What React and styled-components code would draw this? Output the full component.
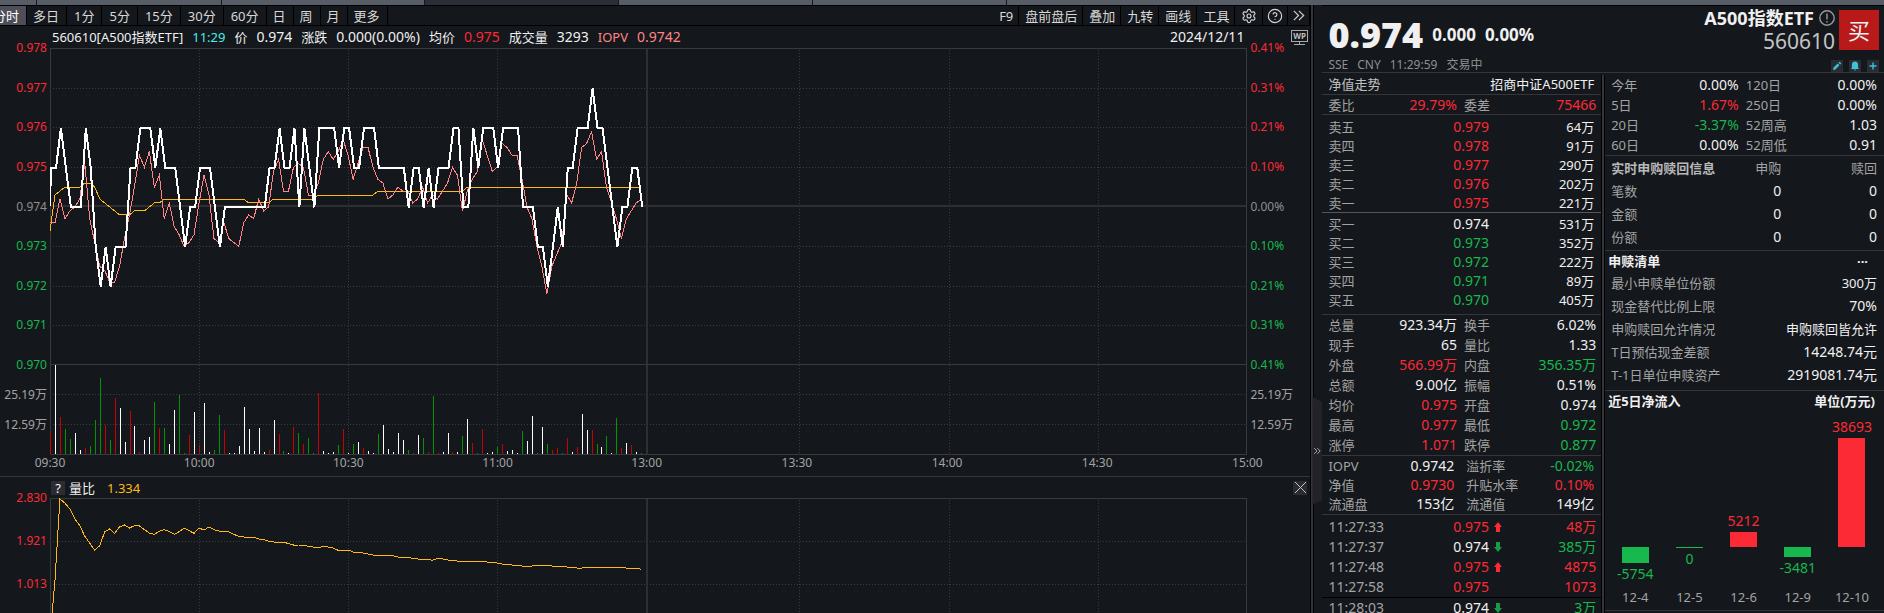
import styled, { createGlobalStyle, css } from "styled-components"
import { Settings, HelpCircle } from "lucide-react"

const colors = {
    bg: "#14171c",
    line: "#35353a",
    red: "#fb2a35",
    green: "#17b84d",
    white: "#f0f0f0",
    label: "#a3a3a3",
    grey: "#8f8f8f",
    cyan: "#45f0e6",
    pink: "#ff8585",
    yellow: "#ffb917",
};

const periods = ["多日", "1分", "5分", "15分", "30分", "60分", "日", "周", "月", "更多"];
const tools = ["F9", "盘前盘后", "叠加", "九转", "画线", "工具"];

const priceLabels = [
    ["0.978", "0.41%", "red"],
    ["0.977", "0.31%", "red"],
    ["0.976", "0.21%", "red"],
    ["0.975", "0.10%", "red"],
    ["0.974", "0.00%", "grey"],
    ["0.973", "0.10%", "green"],
    ["0.972", "0.21%", "green"],
    ["0.971", "0.31%", "green"],
    ["0.970", "0.41%", "green"],
];
const volumeLabels = ["25.19万", "12.59万"];
const times = ["09:30", "10:00", "10:30", "11:00", "13:00", "13:30", "14:00", "14:30", "15:00"];

// one value per minute, last digit of 0.97x
const price = [
    5, 5, 6, 5, 4, 4, 4, 6, 5, 3, 2, 3, 2, 3, 3, 3, 5, 5, 6, 6, 6, 5, 6, 5, 5, 5, 4, 3, 4, 4,
    5, 5, 5, 4, 3, 4, 4, 4, 4, 4, 4, 4, 4, 4, 5, 5, 6, 5, 5, 6, 4, 6, 5, 4, 6, 6, 6, 6, 5, 6,
    6, 5, 5, 6, 6, 6, 5, 5, 5, 5, 5, 5, 4, 5, 5, 4, 5, 4, 5, 5, 5, 6, 6, 4, 4, 6, 5, 6, 6, 6,
    5, 6, 6, 6, 6, 4, 4, 4, 3, 3, 2, 3, 4, 3, 5, 5, 6, 6, 6, 7, 6, 6, 5, 4, 3, 4, 4, 5, 5, 4,
];

// offset from 0.9740 in steps of 0.0001
const iopv = [
    -4, -4, 2, -3, -1, 0, 2, 11, -3, -9, -15, -16, -19, -19, -15, -8, -2, 5, 13, 10, 14, 5, 8, -3, 1, -5, -7, -10, -9, -7,
    1, 8, 3, -8, -9, -4, -8, -9, -10, -4, -2, -3, 2, -1, 0, 9, 12, 4, 4, 10, 11, 10, 3, 3, 6, 12, 14, 12, 14, 17,
    13, 7, 11, 15, 15, 10, 7, 6, 2, 3, 5, 4, 4, 1, 2, 5, 1, 3, 2, 4, 6, 10, 8, -1, 4, 7, 9, 17, 13, 9,
    10, 16, 15, 13, 13, 7, 0, -3, -10, -15, -22, -15, -12, -9, 3, 1, 6, 15, 16, 19, 12, 14, 5, 1, -3, -8, -3, -1, 1, 2,
];

// [minute, offset] where the average changes
const average = [
    [0, -6], [1, 3], [2, 4], [3, 5], [6, 5], [7, 6], [8, 6], [9, 5], [10, 2], [11, 1], [12, 0], [13, -1],
    [14, -2], [16, -2], [17, -1], [19, -1], [21, 1], [22, 1], [23, 2], [39, 2], [40, 1], [44, 1],
    [45, 2], [53, 2], [54, 3], [65, 3], [66, 4], [83, 4], [84, 5], [119, 5],
];

const volume = (
    "r21 w89 r37 g25 g15 w21 w4 r6 g8 g34 g76 r29 g14 r56 w46 w12 r43 w28 r2 w14 w17 g52 r26 g26 w10 w44 g59 g1 r19 w42 " +
    "r9 w51 w2 g4 g39 r24 w1 w1 w8 w47 w25 w3 w26 w2 r4 w34 r20 g3 w1 r27 g21 r10 g16 g1 r61 w3 w1 w2 g9 r25 " +
    "w1 g10 w12 r6 w3 w1 g20 w29 w5 w2 w21 w14 g4 r1 w19 g16 r2 g58 r1 w2 w21 r2 w2 g18 w35 r11 g1 r25 w1 w2 " +
    "g7 r10 w3 w4 w1 g23 w13 w38 g1 w27 g10 r4 r6 g1 r16 w2 r7 w40 w24 r24 g10 w7 g18 w1 g36 r6 w11 r9 w2 g1"
).split(" ");

// distance below 2.830, 129 steps between two labels
const volumeRatio = [
    420, 245, 3, 15, 33, 63, 83, 115, 135, 157, 143, 102, 93, 106, 87, 81, 90, 83, 84, 95, 105, 109, 100, 95, 100, 109, 101, 90, 98, 106,
    90, 96, 87, 95, 99, 99, 102, 109, 115, 117, 117, 117, 123, 124, 130, 132, 132, 132, 137, 141, 141, 142, 145, 147, 150, 144, 147, 150, 157, 159,
    156, 162, 162, 165, 168, 171, 174, 171, 171, 173, 177, 177, 178, 181, 183, 183, 184, 187, 181, 183, 186, 187, 189, 189, 189, 189, 189, 191, 192, 194,
    195, 198, 198, 201, 202, 204, 204, 204, 201, 204, 201, 204, 204, 205, 207, 208, 210, 210, 207, 207, 207, 207, 207, 207, 210, 207, 210, 210, 211, 214,
];

const asks = [
    ["卖五", "0.979", "64万", "red"],
    ["卖四", "0.978", "91万", "red"],
    ["卖三", "0.977", "290万", "red"],
    ["卖二", "0.976", "202万", "red"],
    ["卖一", "0.975", "221万", "red"],
];
const bids = [
    ["买一", "0.974", "531万", "white"],
    ["买二", "0.973", "352万", "green"],
    ["买三", "0.972", "222万", "green"],
    ["买四", "0.971", "89万", "green"],
    ["买五", "0.970", "405万", "green"],
];
const stats = [
    ["总量", "923.34万", "white", "换手", "6.02%", "white"],
    ["现手", "65", "white", "量比", "1.33", "white"],
    ["外盘", "566.99万", "red", "内盘", "356.35万", "green"],
    ["总额", "9.00亿", "white", "振幅", "0.51%", "white"],
    ["均价", "0.975", "red", "开盘", "0.974", "white"],
    ["最高", "0.977", "red", "最低", "0.972", "green"],
    ["涨停", "1.071", "red", "跌停", "0.877", "green"],
];
const fundStats = [
    ["IOPV", "0.9742", "white", "溢折率", "-0.02%", "green"],
    ["净值", "0.9730", "red", "升贴水率", "0.10%", "red"],
    ["流通盘", "153亿", "white", "流通值", "149亿", "white"],
];
const ticks = [
    ["11:27:33", "0.975", "red", "up", "48万", "red"],
    ["11:27:37", "0.974", "white", "down", "385万", "green"],
    ["11:27:48", "0.975", "red", "up", "4875", "red"],
    ["11:27:58", "0.975", "red", "", "1073", "red"],
    ["11:28:03", "0.974", "white", "down", "3万", "green"],
];
const returns = [
    ["今年", "0.00%", "white", "120日", "0.00%", "white"],
    ["5日", "1.67%", "red", "250日", "0.00%", "white"],
    ["20日", "-3.37%", "green", "52周高", "1.03", "white"],
    ["60日", "0.00%", "white", "52周低", "0.91", "white"],
];
const creations = ["笔数", "金额", "份额"];
const basket = [
    ["最小申赎单位份额", "300万"],
    ["现金替代比例上限", "70%"],
    ["申购赎回允许情况", "申购赎回皆允许"],
    ["T日预估现金差额", "14248.74元"],
    ["T-1日单位申赎资产", "2919081.74元"],
];
const inflow = [
    ["12-4", -5754],
    ["12-5", 0],
    ["12-6", 5212],
    ["12-9", -3481],
    ["12-10", 38693],
];

const PLOT_W = 1197;
const TICK_H = 39.6;
const PRICE_H = TICK_H * 8;
const PLOT_H = 407;
const minuteX = (m) => m * 4.967;
const gridX = [149, 298, 447, 749, 899, 1048];
const toPath = (points) => "M" + points.map(([x, y]) => `${x.toFixed(1)} ${y.toFixed(1)}`).join("L");
const offsetY = (n) => (4 - n / 10) * TICK_H + 0.5;

const pricePath = toPath([[0, 4 * TICK_H], ...price.map((p, i) => [minuteX(i) + 1, (8 - p) * TICK_H + 1])]);
const iopvPath = toPath(iopv.map((n, i) => [minuteX(i), offsetY(n)]));
const averagePath = toPath(average.map(([m, n]) => [minuteX(m), offsetY(n)]));
const ratioPath = toPath(volumeRatio.map((n, i) => [minuteX(i), n]));
const barColors = { r: "#c80000", g: "#009600", w: "#ffffff" };
const barPath = (key) =>
    volume.map((bar, i) => (bar[0] === key ? `M${(minuteX(i) + 0.5).toFixed(1)} 406v-${bar.slice(1)}` : "")).join("");

const PriceChart = () => (
    <Plot $height={PLOT_H} viewBox={`0 0 ${PLOT_W} ${PLOT_H}`} preserveAspectRatio="none" role="img" aria-label="分时走势">
        {[1, 2, 3, 5, 6, 7].map((n) => <GridLine key={n} d={`M3 ${Math.round(n * TICK_H) + 0.5}H${PLOT_W}`} />)}
        {[346, 376].map((y) => <GridLine key={y} d={`M3 ${y + 0.5}H${PLOT_W}`} />)}
        {gridX.map((x) => <GridLine key={x} d={`M${x + 0.5} 2V406`} />)}
        <Axis d={`M0 158H${PLOT_W}M596.5 0V406`} $width={2} />
        <Axis d={`M0 0.5H${PLOT_W}M0 ${Math.round(PRICE_H) - 0.5}H${PLOT_W}M0 406.5H${PLOT_W}M0.5 0V406M1196.5 0V406`} />
        {Object.keys(barColors).map((key) => <Series key={key} d={barPath(key)} $color={barColors[key]} />)}
        <Series d={averagePath} $color={colors.yellow} />
        <Series d={iopvPath} $color={colors.pink} />
        <Series d={pricePath} $color="#fff" $width={2} />
    </Plot>
);

const RatioChart = () => (
    <Plot $height={115} viewBox={`0 0 ${PLOT_W} 345`} preserveAspectRatio="none" role="img" aria-label="量比走势">
        {[129, 258].map((y) => <GridLine key={y} d={`M3 ${y}H${PLOT_W}`} />)}
        {gridX.map((x) => <GridLine key={x} d={`M${x + 0.5} 6V345`} />)}
        <Axis d="M596.5 0V345" $width={2} />
        <Axis d={`M0 1.5H${PLOT_W}M0.5 0V345M1196.5 0V345`} />
        <Series d={ratioPath} $color={colors.yellow} />
    </Plot>
);

const DoubleChevron = ({ size }) => (
    <svg width={size} height={size} viewBox="0 0 14 14" fill="none" stroke="#c8c8c8" strokeWidth="1.4">
        <path d="M2 2l5 5-5 5M7.500 2l5 5-5 5" />
    </svg>
);

const Arrow = ({ direction }) => (
    <svg width="8" height="10" viewBox="0 0 8 10" fill={direction === "up" ? colors.red : "#159c45"}>
        <path d={direction === "up" ? "M4 0l4 5H6v5H2V5H0z" : "M4 10l4-5H6V0H2v5H0z"} />
    </svg>
);

const PairTable = ({ rows, inset, height = 20 }) => (
    <Table $height={height} $inset={inset}>
        <tbody>
            {rows.map(([label, value, tone, label2, value2, tone2]) => (
                <tr key={label}>
                    <Label $width="22%">{label}</Label>
                    <Value $width={inset ? "25%" : "26%"} $tone={tone}>{value}</Value>
                    <Label $width="26%" $indent={inset ? 12 : 7}>{label2}</Label>
                    <Value $tone={tone2}>{value2}</Value>
                </tr>
            ))}
        </tbody>
    </Table>
);

const BookTable = ({ rows }) => (
    <Table $height={19} $inset>
        <tbody>
            {rows.map(([label, value, size, tone]) => (
                <tr key={label}>
                    <Label $width="30%">{label}</Label>
                    <Value $width="30%" $tone={tone}>{value}</Value>
                    <Value $small>{size}</Value>
                </tr>
            ))}
        </tbody>
    </Table>
);

const TickTable = ({ rows }) => (
    <Table $height={20}>
        <tbody>
            {rows.map(([time, value, tone, direction, size, sizeTone]) => (
                <tr key={time}>
                    <Label $width="30%" $large>{time}</Label>
                    <Value $width="30%" $tone={tone}>{value}</Value>
                    <ArrowCell>{direction && <Arrow direction={direction} />}</ArrowCell>
                    <Value $tone={sizeTone}>{size}</Value>
                </tr>
            ))}
        </tbody>
    </Table>
);

const Inflow = () => (
    <Bars>
        {inflow.map(([date, amount]) => {
            const tone = amount > 0 ? "red" : "green";
            const bar = <Bar $tone={tone} style={{ height: Math.max(1, Math.round(Math.abs(amount) / 355)) }} />;
            return (
                <BarColumn key={date}>
                    <Above>{amount > 0 && <><Amount $tone={tone}>{amount}</Amount>{bar}</>}</Above>
                    <Below>{amount <= 0 && <>{bar}<Amount $tone={tone}>{amount}</Amount></>}</Below>
                    <DateLabel>{date}</DateLabel>
                </BarColumn>
            );
        })}
    </Bars>
);

const App = () => {
    return (
        <Page>
            <GlobalStyle />
            <TabStrip>
                <StripTab $width={36} />
                <StripTab $width={184} />
                <StripTab $width={202} />
                <StripTab $width={193} $active />
                <StripTab $width={193} />
                <StripTab $width={193} />
                <StripTab $grow />
            </TabStrip>
            <Workspace>
                <ChartPane>
                    <Toolbar>
                        <ActivePeriod>分时</ActivePeriod>
                        {periods.map((name) => <ToolButton key={name} $wide={/\d/.test(name)}>{name}</ToolButton>)}
                        <Spacer />
                        {tools.map((name) => <CompactButton key={name}>{name}</CompactButton>)}
                        <CompactButton aria-label="设置"><Settings size={16} strokeWidth={1.7} /></CompactButton>
                        <TightButton aria-label="帮助"><HelpCircle size={16} strokeWidth={1.7} /></TightButton>
                        <TightButton aria-label="展开"><DoubleChevron size={13} /></TightButton>
                    </Toolbar>
                    <InfoBar>
                        <Info>560610[A500指数ETF]</Info>
                        <Info $tone="cyan">11:29</Info>
                        <Info>价</Info>
                        <Info $large>0.974</Info>
                        <Info>涨跌</Info>
                        <Info $large>0.000(0.00%)</Info>
                        <Info>均价</Info>
                        <Info $large $tone="red">0.975</Info>
                        <Info>成交量</Info>
                        <Info $large>3293</Info>
                        <Info $tone="pink">IOPV</Info>
                        <Info $large $tone="pink">0.9742</Info>
                        <Spacer />
                        <Info $large>2024/12/11</Info>
                        <IconSlot>
                            <svg width="17" height="15" viewBox="0 0 17 15" fill="none" stroke="#a8a8a8">
                                <rect x="0.500" y="0.500" width="16" height="11" />
                                <path d="M8.500 12v2M3 14.500h11" />
                                <text x="8.500" y="9" textAnchor="middle" fontSize="8" fontWeight="700" fill="#c0c0c0" stroke="none">WP</text>
                            </svg>
                        </IconSlot>
                    </InfoBar>
                    <ChartRow>
                        <Scale>
                            <PriceScale>
                                {priceLabels.map(([value, , tone]) => <ScaleLabel key={value} $tone={tone}>{value}</ScaleLabel>)}
                            </PriceScale>
                            {volumeLabels.map((text) => <VolumeLabel key={text}>{text}</VolumeLabel>)}
                        </Scale>
                        <PriceChart />
                        <Scale $right>
                            <PriceScale>
                                {priceLabels.map(([value, percent, tone]) => <ScaleLabel key={value} $tone={tone}>{percent}</ScaleLabel>)}
                            </PriceScale>
                            {volumeLabels.map((text) => <VolumeLabel key={text}>{text}</VolumeLabel>)}
                        </Scale>
                    </ChartRow>
                    <TimeAxis>
                        {times.map((time) => <time key={time}>{time}</time>)}
                    </TimeAxis>
                    <IndicatorBar>
                        <SmallButton aria-label="指标说明">?</SmallButton>
                        <Info>量比</Info>
                        <Ratio>1.334</Ratio>
                        <Spacer />
                        <SmallButton aria-label="关闭">
                            <svg width="13" height="13" viewBox="0 0 13 13" stroke="#c0c0c0">
                                <path d="M1 1l11 11M12 1L1 12" />
                            </svg>
                        </SmallButton>
                    </IndicatorBar>
                    <ChartRow>
                        <Scale>
                            <RatioScale>
                                <ScaleLabel $tone="red">2.830</ScaleLabel>
                                <ScaleLabel $tone="red">1.921</ScaleLabel>
                                <ScaleLabel $tone="red">1.013</ScaleLabel>
                            </RatioScale>
                        </Scale>
                        <RatioChart />
                        <Scale $right />
                    </ChartRow>
                </ChartPane>
                <Gutter>
                    <Handle aria-label="收起"><DoubleChevron size={8} /></Handle>
                </Gutter>
                <Side>
                    <QuoteHeader>
                        <QuoteLine>
                            <LastPrice>0.974</LastPrice>
                            <Change>0.000</Change>
                            <Change>0.00%</Change>
                        </QuoteLine>
                        <Security>
                            <Name>
                                A500指数ETF
                                <svg width="16" height="16" viewBox="0 0 16 16" fill="none" stroke="#999999" strokeWidth="1.4">
                                    <circle cx="8" cy="8" r="7.200" />
                                    <path d="M8 3.500v6M8 11v1.500" />
                                </svg>
                            </Name>
                            <Code>560610</Code>
                        </Security>
                        <BuyButton>买</BuyButton>
                        <Market>
                            <span>SSE</span>
                            <span>CNY</span>
                            <span>11:29:59</span>
                            <span>交易中</span>
                        </Market>
                        <Actions>
                            <MiniButton aria-label="编辑">
                                <svg width="10" height="10" viewBox="0 0 10 10" fill="#3fc1d6">
                                    <path d="M1 9l.6-2.400L5.700 2.500l1.800 1.800L3.400 8.400zM6.400 1.800L7.600.7l1.800 1.800-1.200 1.100z" />
                                </svg>
                            </MiniButton>
                            <MiniButton aria-label="提醒">
                                <svg width="10" height="10" viewBox="0 0 10 10" fill="#3fc1d6">
                                    <path d="M5 .5C2.800.5 1.900 2 1.900 4v2.600L1 8h8l-.9-1.400V4C8.100 2 7.200.5 5 .5zM3.800 8.500h2.400L5 9.700z" />
                                </svg>
                            </MiniButton>
                            <MiniButton aria-label="添加">
                                <svg width="10" height="10" viewBox="0 0 10 10" stroke="#3fc1d6" strokeWidth="1.400">
                                    <path d="M5 1.500v7M1.500 5h7" />
                                </svg>
                            </MiniButton>
                        </Actions>
                    </QuoteHeader>
                    <Columns>
                        <Column>
                            <Section>
                                <TitleRow>
                                    <span>净值走势</span>
                                    <FundName>招商中证A500ETF</FundName>
                                </TitleRow>
                            </Section>
                            <Section>
                                <PairTable height={19} rows={[["委比", "29.79%", "red", "委差", "75466", "red"]]} />
                            </Section>
                            <Section $top={2} $bright>
                                <BookTable rows={asks} />
                            </Section>
                            <Section $top={1} $bottom={5}>
                                <BookTable rows={bids} />
                            </Section>
                            <Section>
                                <PairTable rows={stats} />
                            </Section>
                            <Section $bottom={1}>
                                <PairTable inset height={19} rows={fundStats} />
                            </Section>
                            <Section $top={2} $dark>
                                <TickTable rows={ticks.slice(0, 4)} />
                            </Section>
                            <Section>
                                <TickTable rows={ticks.slice(4)} />
                            </Section>
                        </Column>
                        <Column>
                            <Section $right={7}>
                                <PairTable rows={returns} />
                            </Section>
                            <Section $right={7} $bottom={2}>
                                <Table $height={23}>
                                    <thead>
                                        <tr>
                                            <Label as="th" $strong>实时申购赎回信息</Label>
                                            <Label as="th" $end $width="23%">申购</Label>
                                            <Label as="th" $end $width="36%">赎回</Label>
                                        </tr>
                                    </thead>
                                    <tbody>
                                        {creations.map((name) => (
                                            <tr key={name}>
                                                <Label>{name}</Label>
                                                <Value>0</Value>
                                                <Value>0</Value>
                                            </tr>
                                        ))}
                                    </tbody>
                                </Table>
                            </Section>
                            <Section $right={7} $bottom={4}>
                                <Heading><span>申赎清单</span><MoreButton aria-label="更多">···</MoreButton></Heading>
                                <Table $height={23}>
                                    <tbody>
                                        {basket.map(([label, value]) => (
                                            <tr key={label}>
                                                <Label $width="55%">{label}</Label>
                                                <Value $small={/[万许]$/.test(value)}>{value}</Value>
                                            </tr>
                                        ))}
                                    </tbody>
                                </Table>
                            </Section>
                            <Section $right={7}>
                                <Heading><span>近5日净流入</span><span>单位(万元)</span></Heading>
                                <Inflow />
                            </Section>
                        </Column>
                    </Columns>
                </Side>
            </Workspace>
        </Page>
    )
}

const GlobalStyle = createGlobalStyle`
    *{
        box-sizing:border-box;
    }
    body{
        margin:0;
        background:${colors.bg};
        color:${colors.white};
        font:13px/16px "Noto Sans","Noto Sans CJK SC",sans-serif;
    }
    button{
        font:inherit;
        color:inherit;
        border:none;
        padding:0;
        cursor:pointer;
    }
    svg{
        display:block;
        flex:none;
    }
`;

const tone = css`
    color:${(props) => colors[props.$tone || "white"]};
`;

const Page = styled.div`
    height:100vh;
    display:flex;
    flex-direction:column;
    overflow:hidden;
`;

const TabStrip = styled.div`
    display:flex;
    gap:1px;
    height:5px;
    flex:none;
    background:#14161a;
`;

const StripTab = styled.div`
    width:${(props) => props.$width}px;
    flex:${(props) => (props.$grow ? 1 : "none")};
    background:${(props) => (props.$active ? "#2c2d36" : "#565d67")};
`;

const Workspace = styled.main`
    flex:1;
    min-height:0;
    display:grid;
    grid-template-columns:minmax(0,7fr) 12px minmax(0,3fr);
`;

const ChartPane = styled.section`
    display:flex;
    flex-direction:column;
    min-width:0;
    overflow:hidden;
`;

const Toolbar = styled.div`
    display:flex;
    flex:none;
    height:21px;
    border-top:1px solid #000;
    border-bottom:1px solid #000;
    color:#d8d8d8;
`;

const ToolButton = styled.button`
    display:flex;
    align-items:center;
    background:none;
    padding:0 7px 0 ${(props) => (props.$wide ? 7 : 6)}px;
    border-right:1px solid #000;
    &:hover{
        background:#2c2d36;
    }
`;

const CompactButton = styled(ToolButton)`
    padding:0 5px 0 6px;
`;

const TightButton = styled(ToolButton)`
    padding:0 4px;
`;

const ActivePeriod = styled(ToolButton)`
    width:27px;
    padding:0 7px 0 0;
    justify-content:flex-end;
    white-space:nowrap;
    overflow:hidden;
    background:#4e4e58;
    color:#fff;
`;

const Spacer = styled.div`
    flex:1;
`;

const InfoBar = styled.div`
    display:flex;
    align-items:center;
    flex:none;
    gap:9px;
    height:22px;
    padding-left:52px;
`;

const Info = styled.span`
    ${tone}
    font-size:${(props) => (props.$large ? 14 : 13)}px;
    white-space:nowrap;
`;

const IconSlot = styled.span`
    width:57px;
    padding-left:38px;
`;

const ChartRow = styled.div`
    display:grid;
    grid-template-columns:50px minmax(0,1fr) 63px;
    flex:none;
`;

const Scale = styled.div`
    display:flex;
    flex-direction:column;
    align-items:${(props) => (props.$right ? "flex-start" : "flex-end")};
    padding:0 3px;
    margin-top:-8px;
    font-size:12px;
    color:${colors.label};
`;

const PriceScale = styled.div`
    display:flex;
    flex-direction:column;
    justify-content:space-between;
    height:333px;
`;

const RatioScale = styled(PriceScale)`
    height:102px;
`;

const ScaleLabel = styled.span`
    ${tone}
`;

const VolumeLabel = styled.span`
    margin-top:14px;
`;

const Plot = styled.svg`
    width:100%;
    height:${(props) => props.$height}px;
    shape-rendering:crispEdges;
    path{
        fill:none;
        vector-effect:non-scaling-stroke;
    }
`;

const GridLine = styled.path`
    stroke:#3a3b40;
    stroke-dasharray:1 2;
`;

const Axis = styled.path`
    stroke:${(props) => (props.$width ? "#2f2f33" : "#3a3a3e")};
    stroke-width:${(props) => props.$width || 1};
`;

const Series = styled.path`
    stroke:${(props) => props.$color};
    stroke-width:${(props) => props.$width || 1};
`;

const TimeAxis = styled.div`
    display:grid;
    grid-template-columns:repeat(4,149fr) repeat(4,150fr) 50px;
    flex:none;
    height:21px;
    padding:0 38px 0 25px;
    color:${colors.label};
    font-size:12px;
    time{
        width:50px;
        text-align:center;
    }
`;

const IndicatorBar = styled.div`
    display:flex;
    align-items:center;
    flex:none;
    gap:4px;
    height:22px;
    padding:0 3px 0 51px;
    border-top:1px solid ${colors.line};
`;

const Ratio = styled.span`
    margin-left:8px;
    color:${colors.yellow};
`;

const SmallButton = styled.button`
    display:flex;
    align-items:center;
    justify-content:center;
    width:14px;
    height:14px;
    background:#2b2b31;
`;

const Gutter = styled.div`
    border-left:1px solid #000;
    box-shadow:inset 2px 0 #34343a, inset 3px 0 #000;
`;

const Handle = styled.button`
    display:flex;
    align-items:center;
    justify-content:center;
    width:10px;
    height:108px;
    margin:392px 0 0 1px;
    background:#232228;
    clip-path:polygon(0 0,100% 5px,100% 103px,0 100%);
`;

const Side = styled.aside`
    display:flex;
    flex-direction:column;
    min-width:0;
    border-top:1px solid #000;
    overflow:hidden;
`;

const QuoteHeader = styled.header`
    display:grid;
    grid-template-columns:1fr auto 40px;
    grid-template-rows:48px 18px;
    column-gap:4px;
    flex:none;
    padding:0 5px 0 6px;
    border-bottom:1px solid ${colors.line};
`;

const QuoteLine = styled.div`
    display:flex;
    align-items:center;
    gap:9px;
    padding-top:10px;
    font-weight:700;
`;

const LastPrice = styled.strong`
    font-size:36px;
    line-height:36px;
`;

const Change = styled.span`
    font-size:17px;
    line-height:24px;
`;

const Security = styled.div`
    display:flex;
    flex-direction:column;
    align-items:flex-end;
`;

const Name = styled.h1`
    display:flex;
    align-items:center;
    gap:5px;
    margin:0;
    padding-top:1px;
    font-size:18px;
    line-height:22px;
`;

const Code = styled.span`
    font-size:21px;
    line-height:24px;
    color:#c4c4c4;
`;

const BuyButton = styled.button`
    height:40px;
    margin-top:4px;
    background:#b81a1a;
    font-size:22px;
    line-height:40px;
`;

const Market = styled.div`
    display:flex;
    align-items:flex-end;
    gap:9px;
    color:${colors.grey};
    font-size:12px;
    line-height:14px;
`;

const Actions = styled.div`
    grid-column:2 / 4;
    display:flex;
    align-items:flex-end;
    justify-content:flex-end;
    gap:6px;
`;

const MiniButton = styled.button`
    display:flex;
    align-items:center;
    justify-content:center;
    width:12px;
    height:12px;
    background:#2a2c33;
`;

const Columns = styled.div`
    flex:1;
    display:grid;
    grid-template-columns:minmax(0,1fr) minmax(0,1fr);
    gap:4px;
    margin-top:2px;
    min-height:0;
    background:linear-gradient(#34343a,#34343a) center / 2px 100% no-repeat #000;
`;

const Column = styled.div`
    background:${colors.bg};
    min-height:0;
    overflow:hidden;
`;

const Section = styled.section`
    padding:${(props) => props.$top || 0}px ${(props) => props.$right || 5}px ${(props) => props.$bottom || 0}px 6px;
    border-bottom:1px solid ${(props) => (props.$dark ? "#000" : props.$bright ? "#55555e" : colors.line)};
`;

const TitleRow = styled.div`
    display:flex;
    justify-content:space-between;
    padding-right:2px;
    line-height:19px;
    color:#c0c0c0;
`;

const FundName = styled.span`
    color:${colors.white};
`;

const Table = styled.table`
    width:100%;
    border-collapse:collapse;
    table-layout:fixed;
    td,th{
        height:${(props) => props.$height}px;
        line-height:16px;
        white-space:nowrap;
    }
    td:last-child{
        padding-right:${(props) => (props.$inset ? 2 : 0)}px;
    }
`;

const Label = styled.td`
    width:${(props) => props.$width || "auto"};
    padding:0 0 0 ${(props) => props.$indent || 0}px;
    color:${(props) => (props.$strong ? "#b8b8b8" : colors.label)};
    font-size:${(props) => (props.$large ? 14 : 13)}px;
    font-weight:${(props) => (props.$strong ? 700 : 400)};
    text-align:${(props) => (props.$end ? "right" : "left")};
`;

const Value = styled.td`
    ${tone}
    width:${(props) => props.$width || "auto"};
    padding:0;
    font-size:${(props) => (props.$small ? 13 : 14)}px;
    text-align:right;
`;

const ArrowCell = styled.td`
    width:14px;
    padding:0 0 0 5px;
`;

const Heading = styled.h2`
    display:flex;
    justify-content:space-between;
    margin:0 2px 0 -3px;
    font-size:13px;
    line-height:20px;
`;

const MoreButton = styled.button`
    padding:0 7px;
    background:none;
`;

const Bars = styled.div`
    display:grid;
    grid-template-columns:repeat(5,1fr);
    margin:0 -2px 0 -3px;
`;

const BarColumn = styled.div`
    display:flex;
    flex-direction:column;
    align-items:center;
`;

const Above = styled.div`
    display:flex;
    flex-direction:column;
    justify-content:flex-end;
    align-items:center;
    gap:3px;
    height:136px;
`;

const Below = styled(Above)`
    justify-content:flex-start;
    height:41px;
`;

const Bar = styled.div`
    width:27px;
    background:${(props) => colors[props.$tone]};
`;

const Amount = styled.span`
    ${tone}
    font-size:14px;
`;

const DateLabel = styled.span`
    padding-bottom:4px;
    line-height:18px;
    color:${colors.label};
`;

export default App
